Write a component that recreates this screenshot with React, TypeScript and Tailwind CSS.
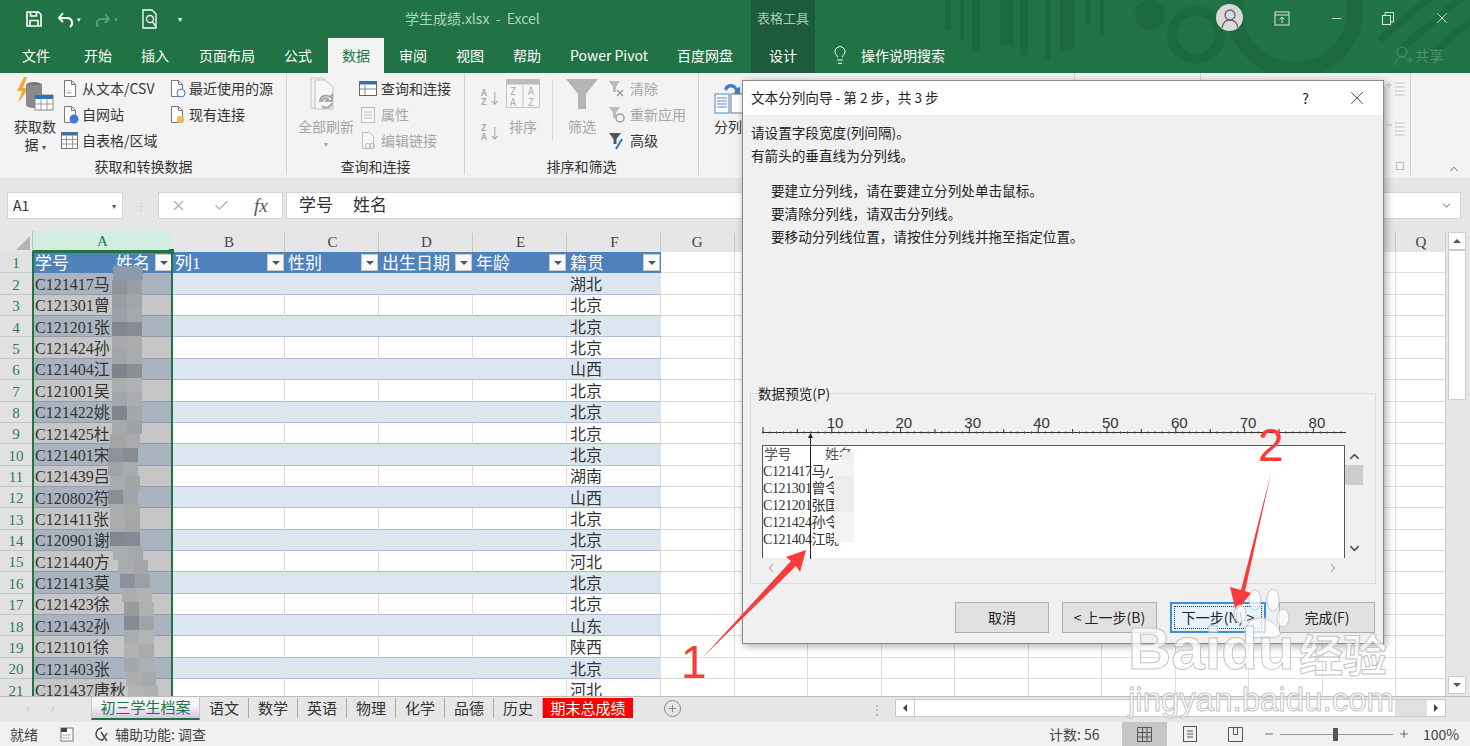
import type { ReactNode } from "react";
import { ChevronDown, ChevronUp, ChevronLeft, ChevronRight, Lightbulb, X, Check, Minus, Plus } from "lucide-react";

const ui = "font-['Noto_Sans_CJK_SC','Noto_Sans',sans-serif]";

const tabs = [
  { label: "文件", cls: "ml-[10px] w-[52px]" },
  { label: "开始", cls: "w-[72px]" },
  { label: "插入", cls: "w-[42px]" },
  { label: "页面布局", cls: "w-[102px]" },
  { label: "公式", cls: "w-[40px]" },
  { label: "数据", cls: "ml-[10px] w-[56px] bg-[#f3f3f3] text-[#217346]" },
  { label: "审阅", cls: "w-[58px]" },
  { label: "视图", cls: "w-[56px]" },
  { label: "帮助", cls: "w-[58px]" },
  { label: "Power Pivot", cls: "w-[106px]" },
  { label: "百度网盘", cls: "w-[86px]" },
  { label: "设计", cls: "ml-[3px] w-[64px] bg-[#1d5c3a]" },
];

const places = ["湖北", "北京", "北京", "北京", "山西", "北京", "北京", "北京", "北京", "湖南", "山西", "北京", "北京", "河北", "北京", "北京", "山东", "陕西", "北京", "河北"];
const ids = ["C121417马", "C121301曾", "C121201张", "C121424孙", "C121404江", "C121001吴", "C121422姚", "C121425杜", "C121401宋", "C121439吕", "C120802符", "C121411张", "C120901谢", "C121440方", "C121413莫", "C121423徐", "C121432孙", "C121101徐", "C121403张", "C121437唐秋"];
const sheets = ["语文", "数学", "英语", "物理", "化学", "品德", "历史"];
const tableCols = [
  { l: "B", w: "w-[113px]", t: "列1" },
  { l: "C", w: "w-[94px]", t: "性别" },
  { l: "D", w: "w-[94px]", t: "出生日期" },
  { l: "E", w: "w-[94px]", t: "年龄" },
  { l: "F", w: "w-[94px]", t: "籍贯" },
];
const plainCols = ["G", "H", "I", "J", "K", "L", "M", "N", "O", "P"];

// mosaic over the names: y, x, colour left, colour right
const mosaic: [number, number, string, string][] = [
  [266, 113, "#8d9aad", "#8d9aad"], [280, 112, "#8f949b", "#9a9ea3"], [294, 112, "#9a9ea3", "#a3a6a9"],
  [308, 112, "#9aa0a8", "#a5a9ae"], [322, 112, "#83868f", "#878b93"], [336, 112, "#a6a8aa", "#aaacae"],
  [350, 112, "#a3a5a8", "#a9abad"], [364, 112, "#7f838c", "#8a8e95"], [378, 112, "#aaacae", "#b0b2b3"],
  [392, 112, "#a4a7aa", "#abaeb0"], [406, 112, "#82858d", "#a3a8ad"], [420, 112, "#a7a9ab", "#a0a2a5"],
  [434, 110, "#a3a5a7", "#a8aaab"], [448, 108, "#8e929a", "#878b93"], [462, 108, "#a1a4a7", "#a8abad"],
  [476, 110, "#a9abad", "#a2a4a7"], [490, 108, "#8a8e95", "#a0a4a9"], [504, 110, "#aaacae", "#a6a8aa"],
  [518, 110, "#aaacae", "#a4a6a8"], [532, 110, "#82868e", "#858991"], [546, 113, "#abadaf", "#a6a8aa"],
  [560, 118, "#a9abad", "#a4a6a8"], [574, 120, "#8b909a", "#9ba0a6"], [588, 122, "#aaacae", "#b0b2b3"],
  [602, 124, "#9b9b9b", "#aeb0b1"], [616, 124, "#868a91", "#a0a4a8"], [630, 124, "#aaacae", "#b2b3b4"],
  [644, 124, "#b0b1b2", "#a8aaac"], [658, 124, "#a5a8ab", "#adb0b2"], [672, 126, "#adaeaf", "#a8a9aa"],
  [686, 128, "#b4b4b4", "#b0b0b0"],
];

function FilterBtn() {
  return (
    <span className="ml-auto flex h-[17px] w-[17px] shrink-0 items-center justify-center border border-[#c8c8c8] bg-[#f8f8f8]">
      <span className="h-0 w-0 border-x-[4px] border-t-[4px] border-x-transparent border-t-[#555]" />
    </span>
  );
}

function Doc({ badge }: { badge?: ReactNode }) {
  return (
    <svg width="17" height="19" viewBox="0 0 17 19" className="shrink-0">
      <path d="M2.5 1.5h7l4 4v12h-11z" fill="#fff" stroke="#777" />
      <path d="M9.5 1.5v4h4" fill="none" stroke="#777" />
      {badge}
    </svg>
  );
}

function RibbonItem({ icon, text, gray }: { icon: ReactNode; text: string; gray?: boolean }) {
  return (
    <div className={`flex h-[26px] items-center gap-[3px] whitespace-nowrap text-[14px] ${gray ? "text-[#a6a6a6]" : "text-[#333]"}`}>
      {icon}
      <span>{text}</span>
    </div>
  );
}

function SortMark({ top, bottom }: { top: string; bottom: string }) {
  return (
    <span className="flex items-center">
      <span className="flex flex-col">
        <span>{top}</span>
        <span>{bottom}</span>
      </span>
      <span className="ml-[1px] text-[14px] font-normal">↓</span>
    </span>
  );
}

function Ribbon() {
  return (
    <div className="flex h-[105px] shrink-0 bg-[#f3f3f3] text-[#333]">
      {/* 获取和转换数据 */}
      <div className="flex h-[102px] w-[287px] flex-col border-r border-[#d2d2d2]">
        <div className="flex h-[88px] pt-[3px]">
          <div className="ml-[13px] flex w-[44px] flex-col items-center">
            <svg width="40" height="36" viewBox="0 0 40 36">
              <path d="M9 1 2 15h5L3 27l11-15H8l4-11z" fill="#f0a93a" />
              <ellipse cx="19" cy="9" rx="8" ry="3" fill="#777" />
              <path d="M11 9v20c0 4 16 4 16 0V9z" fill="#8a8a8a" />
              <rect x="20" y="19" width="18" height="15" fill="#fff" stroke="#888" />
              <rect x="20" y="19" width="18" height="4" fill="#2f75b5" />
              <path d="M26 23v11M32 23v11M20 28h18" stroke="#999" />
            </svg>
            <span className="mt-[5px] text-[14px] leading-[18px]">获取数</span>
            <span className="text-[14px] leading-[18px]">据 <span className="text-[8px] text-[#555]">▾</span></span>
          </div>
          <div className="ml-[5px] -mt-[1px] flex w-[107px] flex-col">
            <RibbonItem text="从文本/CSV" icon={<Doc badge={<text x="4" y="15" fontSize="6" fill="#777">≡</text>} />} />
            <RibbonItem text="自网站" icon={<Doc badge={<circle cx="12" cy="14" r="4.5" fill="#3d7cc9" />} />} />
            <RibbonItem
              text="自表格/区域"
              icon={
                <svg width="19" height="19" viewBox="0 0 19 19" className="-ml-[2px] shrink-0">
                  <rect x="1.5" y="1.5" width="16" height="16" fill="#fff" stroke="#777" />
                  <rect x="1.5" y="1.5" width="16" height="3" fill="#2f75b5" />
                  <path d="M6.5 4v13M12.5 4v13M2 8.5h15M2 13h15" stroke="#999" />
                </svg>
              }
            />
          </div>
          <div className="-mt-[1px] flex flex-col">
            <RibbonItem text="最近使用的源" icon={<Doc badge={<circle cx="12" cy="14" r="4" fill="#fff" stroke="#3d7cc9" />} />} />
            <RibbonItem text="现有连接" icon={<Doc badge={<rect x="8" y="11" width="7" height="7" rx="2" fill="#f0b860" />} />} />
          </div>
        </div>
        <div className="pl-[1px] text-center text-[14px] leading-[18px]">获取和转换数据</div>
      </div>
      {/* 查询和连接 */}
      <div className="flex h-[102px] w-[178px] flex-col border-r border-[#d2d2d2]">
        <div className="flex h-[88px] pt-[3px]">
          <div className="ml-[11px] flex w-[56px] flex-col items-center text-[#a6a6a6]">
            <svg width="46" height="36" viewBox="0 0 46 36">
              <path d="M8 2h12l6 6v24H8z" fill="#f4f4f4" stroke="#c4c4c4" />
              <path d="M12 4h10l8 7v22H12z" fill="#f7f7f7" stroke="#bdbdbd" />
              <path d="M17 25a6 6 0 0 1 10-4l2-2v6h-6l2-2a4 4 0 0 0-6 2zM29 27a6 6 0 0 1-10 3" fill="none" stroke="#a8a8a8" strokeWidth="2" />
            </svg>
            <span className="mt-[5px] text-[14px] leading-[18px]">全部刷新</span>
            <span className="text-[8px] leading-[18px]">▾</span>
          </div>
          <div className="ml-[4px] -mt-[1px] flex flex-col">
            <RibbonItem
              text="查询和连接"
              icon={
                <svg width="20" height="19" viewBox="0 0 20 19" className="shrink-0">
                  <rect x="1.5" y="2.5" width="17" height="14" fill="#fff" stroke="#666" />
                  <rect x="1.5" y="2.5" width="17" height="3" fill="#2f75b5" />
                  <path d="M7 6v10M2 10h16" stroke="#888" />
                </svg>
              }
            />
            <RibbonItem
              gray
              text="属性"
              icon={
                <svg width="20" height="19" viewBox="0 0 20 19" className="shrink-0">
                  <rect x="3.5" y="2.5" width="13" height="15" fill="#f7f7f7" stroke="#bbb" />
                  <path d="M6 7h8M6 10h8M6 13h8" stroke="#bbb" />
                </svg>
              }
            />
            <RibbonItem
              gray
              text="编辑链接"
              icon={
                <svg width="20" height="19" viewBox="0 0 20 19" className="shrink-0">
                  <path d="M4.5 1.5h7l4 4v12h-11z" fill="#f7f7f7" stroke="#bbb" />
                  <circle cx="10" cy="15" r="2.5" fill="none" stroke="#bbb" />
                  <circle cx="14" cy="15" r="2.5" fill="none" stroke="#bbb" />
                </svg>
              }
            />
          </div>
        </div>
        <div className="text-center text-[14px] leading-[18px]">查询和连接</div>
      </div>
      {/* 排序和筛选 */}
      <div className="flex h-[102px] w-[234px] flex-col border-r border-[#d2d2d2]">
        <div className="flex h-[88px] pt-[6px] text-[#a6a6a6]">
          <div className="ml-[16px] flex w-[22px] flex-col gap-[17px] pt-[9px] text-[9px] font-bold leading-[9px] text-[#aaa]">
            <SortMark top="A" bottom="Z" />
            <SortMark top="Z" bottom="A" />
          </div>
          <div className="ml-[2px] flex w-[36px] flex-col items-center border-r-0">
            <svg width="34" height="29" viewBox="0 0 34 29">
              <rect x="0.5" y="0.5" width="33" height="28" fill="#f6f6f6" stroke="#c4c4c4" />
              <rect x="0.5" y="0.5" width="33" height="5" fill="#bdbdbd" />
              <path d="M17 6v22" stroke="#c4c4c4" />
              <text x="4" y="16" fontSize="10" fill="#aaa">Z</text><text x="22" y="16" fontSize="10" fill="#aaa">A</text>
              <text x="4" y="27" fontSize="10" fill="#aaa">A</text><text x="22" y="27" fontSize="10" fill="#aaa">Z</text>
            </svg>
            <span className="mt-[9px] text-[14px] leading-[18px]">排序</span>
          </div>
          <div className="ml-[11px] h-[62px] w-[1px] bg-[#dcdcdc]" />
          <div className="ml-[12px] flex w-[34px] flex-col items-center">
            <svg width="32" height="31" viewBox="0 0 32 31">
              <path d="M0 0h32L20 15v15h-8V15z" fill="#b5b5b5" />
            </svg>
            <span className="mt-[7px] text-[14px] leading-[18px]">筛选</span>
          </div>
          <div className="ml-[8px] -mt-[4px] flex flex-col">
            <RibbonItem gray text="清除" icon={<svg width="20" height="19" viewBox="0 0 20 19" className="shrink-0"><path d="M2 2h11L9 8v5H6V8z" fill="#bbb" /><path d="M10 11l6 6M16 11l-6 6" stroke="#999" strokeWidth="1.4" /></svg>} />
            <RibbonItem gray text="重新应用" icon={<svg width="20" height="19" viewBox="0 0 20 19" className="shrink-0"><path d="M2 2h11L9 8v5H6V8z" fill="#bbb" /><circle cx="13" cy="13" r="4" fill="none" stroke="#999" strokeWidth="1.4" /></svg>} />
            <RibbonItem text="高级" icon={<svg width="20" height="19" viewBox="0 0 20 19" className="shrink-0"><path d="M2 2h12L9.5 8v5h-3V8z" fill="#555" /><path d="M15 8l-6 10" stroke="#2f75b5" strokeWidth="2" /></svg>} />
          </div>
        </div>
        <div className="text-center text-[14px] leading-[18px]">排序和筛选</div>
      </div>
      {/* 数据工具, mostly under the dialog */}
      <div className="flex h-[102px] w-[376px] flex-col border-r border-[#d2d2d2]">
        <div className="ml-[15px] flex h-[83px] w-[40px] flex-col pt-[10px]">
          <svg width="30" height="32" viewBox="0 0 30 32">
            <path d="M10 6a7 7 0 0 1 13-1l3-1v7h-7l2-2a4 4 0 0 0-8-1z" fill="#3d7cc9" />
            <rect x="1" y="11" width="14" height="19" fill="#fff" stroke="#4a86c8" />
            <path d="M3 15h10M3 18h10M3 21h10M3 24h10" stroke="#4a86c8" />
            <rect x="17" y="11" width="12" height="19" fill="#fff" stroke="#777" />
          </svg>
          <span className="mt-[2px] whitespace-nowrap text-[14px] leading-[18px]">分列</span>
        </div>
      </div>
      <div className="h-[102px] w-[126px] border-r border-[#d2d2d2]" />
      {/* 分级显示, only its right edge shows past the dialog */}
      <div className="flex h-[102px] w-[210px] flex-col items-end gap-[24px] border-r border-[#d2d2d2] pr-[3px] pt-[8px]">
        <svg width="24" height="16" viewBox="0 0 24 16" stroke="#c4c4c4" fill="none">
          <path d="M3 4h6M6 1v6" />
          <path d="M12 2h10M12 6h10M12 10h10M12 14h10" />
        </svg>
        <svg width="24" height="16" viewBox="0 0 24 16" stroke="#c4c4c4" fill="none">
          <path d="M3 4h6" />
          <path d="M12 2h10M12 6h10M12 10h10M12 14h10" />
        </svg>
      </div>
      <div className="relative flex-1">
        <span className="absolute left-[-15px] bottom-[8px] h-[8px] w-[8px] border border-[#bbb]" />
        <ChevronUp className="absolute bottom-[2px] right-[9px] h-[14px] w-[14px] text-[#555]" strokeWidth={1.5} />
      </div>
    </div>
  );
}

function Sheet() {
  return (
    <div className="relative flex h-[465px] shrink-0 overflow-hidden bg-white font-['Liberation_Serif','Noto_Sans_CJK_SC',serif] text-[16px]">
      <div className="w-[1445px] shrink-0">
        {/* column letters */}
        <div className="flex h-[21px] bg-[#e6e6e6] pt-[2px] text-[15px] text-[#444]">
          <div className="relative -mt-[2px] w-[33px] shrink-0 border-r border-[#bbb]">
            <span className="absolute bottom-[2px] right-[2px] h-0 w-0 border-b-[14px] border-l-[14px] border-b-[#b4b4b4] border-l-transparent" />
          </div>
          <div className="-mt-[2px] flex w-[139px] shrink-0 items-center justify-center border-b-2 border-[#217346] bg-[#d2eee0] pt-[2px] text-[#217346]">A</div>
          {tableCols.map((c) => (
            <div key={c.l} className={`${c.w} flex shrink-0 items-center justify-center border-r border-[#c6c6c6] pl-[2px]`}>{c.l}</div>
          ))}
          {plainCols.map((c) => (
            <div key={c} className="flex w-[73.5px] shrink-0 items-center justify-center border-r border-[#c6c6c6]">{c === "G" ? c : ""}</div>
          ))}
          <div className="flex w-[50px] shrink-0 items-center justify-center">Q</div>
        </div>
        {/* header row */}
        <div className="flex h-[21.37px] text-[17px]">
          <RowHead n={1} />
          <div className="flex w-[139px] shrink-0 items-center whitespace-nowrap bg-[#4f81bd] pl-[2px] text-white">
            <span className="pt-[2px]">学号</span>
            <span className="ml-[47px] pt-[2px]">姓名</span>
            <FilterBtn />
          </div>
          {tableCols.map((c) => (
            <div key={c.l} className={`${c.w} flex shrink-0 items-center whitespace-nowrap bg-[#4f81bd] pl-[3px] pr-[1px] text-white`}>
              <span className="pt-[2px]">{c.t}</span>
              <FilterBtn />
            </div>
          ))}
          <GridRest />
        </div>
        {places.map((p, i) => {
          const band = i % 2 === 0;
          return (
            <div key={i} className="flex h-[21.37px]">
              <RowHead n={i + 2} />
              <div className={`flex w-[139px] shrink-0 items-center overflow-hidden whitespace-nowrap border-b border-[#8f9cab] pl-[2px] pt-[3px] text-[#333] ${band ? "bg-[#aab4c0]" : "bg-[#c6c6c6]"}`}>{ids[i]}</div>
              {tableCols.map((c) => (
                <div key={c.l} className={`${c.w} flex shrink-0 items-center border-b border-[#a9c0dd] pl-[3px] pt-[3px] text-[#333] ${band ? "bg-[#dce6f1]" : "border-r border-r-[#dcdcdc] bg-white"}`}>
                  {c.l === "F" ? p : ""}
                </div>
              ))}
              <GridRest />
            </div>
          );
        })}
        {/* selection outline */}
        <div className="pointer-events-none absolute left-[32px] top-[20px] h-[450px] w-[141px] border-x-2 border-t-2 border-[#217346]" />
        <div className="pointer-events-none absolute left-[169px] top-[18px] h-[5px] w-[5px] bg-[#217346]" />
        <svg className="pointer-events-none absolute left-0 top-0" width="180" height="465" viewBox="0 231 180 465">
          {mosaic.map(([y, x, a, b]) => (
            <g key={y}>
              <rect x={x} y={y} width="15" height="14" fill={a} />
              <rect x={x + 15} y={y} width="15" height="14" fill={b} />
            </g>
          ))}
        </svg>
      </div>
      {/* vertical scrollbar */}
      <div className="flex w-[25px] flex-col items-center border-l border-[#d0d0d0] bg-[#e6e6e6] pr-[3px] pt-[1px]">
        <div className="flex h-[18px] w-[18px] items-center justify-center border border-[#ccc] bg-white">
          <span className="h-0 w-0 border-x-[4px] border-b-[4px] border-x-transparent border-b-[#555]" />
        </div>
        <div className="h-[150px] w-[18px] border border-[#ccc] bg-white" />
        <div className="mt-auto mb-[2px] flex h-[18px] w-[18px] items-center justify-center border border-[#ccc] bg-white">
          <span className="h-0 w-0 border-x-[4px] border-t-[4px] border-x-transparent border-t-[#555]" />
        </div>
      </div>
    </div>
  );
}

function RowHead({ n }: { n: number }) {
  return (
    <div className="flex w-[33px] shrink-0 items-center justify-center border-b border-r border-[#c6c6c6] bg-[#e1e1e1] pt-[3px] text-[15px] text-[#2f7d55]">
      {n}
    </div>
  );
}

function GridRest() {
  return (
    <>
      {plainCols.map((c) => (
        <div key={c} className="w-[73.5px] shrink-0 border-b border-r border-[#dcdcdc]" />
      ))}
      <div className="w-[50px] shrink-0 border-b border-[#dcdcdc]" />
    </>
  );
}

function Dialog() {
  const ruler = [10, 20, 30, 40, 50, 60, 70, 80];
  const preview = ["C121417马小", "C121301曾令", "C121201张国", "C121424孙令", "C121404江晓"];
  return (
    <div className="absolute left-[742px] top-[80px] flex h-[564px] w-[642px] flex-col border border-[#8a8a8a] bg-[#f0f0f0] text-[13.6px] text-[#222] shadow-[2px_2px_8px_rgba(0,0,0,0.35)]">
      <div className="flex h-[34px] shrink-0 items-center bg-white pl-[8px] pr-[15px]">
        <span className="pb-[2px]">文本分列向导 - 第 2 步，共 3 步</span>
        <span className="ml-auto text-[14px]">?</span>
        <X className="ml-[37px] h-[22px] w-[22px] text-[#444]" strokeWidth={1} />
      </div>
      <div className="flex flex-col px-[8px] pt-[6px] leading-[23px]">
        <p>请设置字段宽度(列间隔)。</p>
        <p>有箭头的垂直线为分列线。</p>
        <div className="mt-[12px] pl-[20px]">
          <p>要建立分列线，请在要建立分列处单击鼠标。</p>
          <p>要清除分列线，请双击分列线。</p>
          <p>要移动分列线位置，请按住分列线并拖至指定位置。</p>
        </div>
      </div>
      {/* 数据预览 */}
      <div className="relative mx-[7px] mt-[145px] h-[191px] w-[626px] border border-[#dcdcdc]">
        <span className="absolute -top-[9px] left-[7px] bg-[#f0f0f0] leading-[16px]">数据预览(P)</span>
        <div className="absolute left-[75px] top-[20px] flex w-[500px] justify-between font-['Liberation_Sans',sans-serif] text-[15px] leading-[18px] text-[#333]">
          {ruler.map((r) => (
            <span key={r} className="w-[18px] text-center">{r}</span>
          ))}
        </div>
        <svg className="absolute left-[11px] top-[32px]" width="584" height="10" viewBox="0 0 584 10">
          <path d="M0 6.5h584" stroke="#333" />
          {Array.from({ length: 17 }, (_, i) => (
            <path key={i} d={`M${1 + i * 34.4} ${i % 2 ? 3 : 1}V6`} stroke="#333" />
          ))}
          {Array.from({ length: 85 }, (_, i) => (
            <path key={i} d={`M${1 + i * 6.88} 5V8`} stroke="#555" strokeWidth="0.7" />
          ))}
        </svg>
        <div className="absolute left-[11px] top-[51px] h-[113px] w-[583px] overflow-hidden border-x border-t border-[#555] bg-white font-['Liberation_Serif','Noto_Sans_CJK_SC',serif] text-[14px] leading-[17px] tracking-[-0.4px] text-[#333]">
          <div className="flex"><span className="w-[62px] pl-[1px] text-[#555]">学号</span><span className="text-[#555]">姓名</span></div>
          {preview.map((p) => (
            <div key={p}>{p}</div>
          ))}
          <svg className="absolute left-[65px] top-[6px]" width="26" height="90" viewBox="0 0 26 90">
            <rect x="14" y="0" width="12" height="90" fill="#f0f0f0" />
            <rect x="2" y="12" width="24" height="12" fill="#f4f4f4" />
            <rect x="6" y="24" width="20" height="36" fill="#ededed" />
            <rect x="6" y="60" width="20" height="30" fill="#f3f3f3" />
          </svg>
        </div>
        <svg className="absolute left-[55px] top-[37px]" width="9" height="128" viewBox="0 0 9 128">
          <path d="M4.500 6v122" stroke="#222" />
          <path d="M4.500 2 7 7H2z" fill="#222" />
        </svg>
        <ChevronUp className="absolute left-[596px] top-[55px] h-[15px] w-[15px] text-[#555]" strokeWidth={2.5} />
        <div className="absolute left-[594px] top-[71px] h-[20px] w-[18px] bg-[#cdcdcd]" />
        <ChevronDown className="absolute left-[596px] top-[147px] h-[15px] w-[15px] text-[#555]" strokeWidth={2.5} />
        <ChevronLeft className="absolute left-[13px] top-[167px] h-[14px] w-[14px] text-[#b8b8b8]" strokeWidth={2} />
        <ChevronRight className="absolute left-[575px] top-[167px] h-[14px] w-[14px] text-[#b8b8b8]" strokeWidth={2} />
      </div>
      {/* buttons */}
      <div className="mr-[8px] mt-[18px] flex justify-end gap-[13px]">
        <DlgBtn text="取消" cls="w-[94px]" />
        <DlgBtn text="< 上一步(B)" cls="w-[95px]" />
        <div className="flex h-[31px] w-[96px] items-center justify-center border-2 border-[#3a8fdc] bg-[#e5f1fb] text-[14px]">
          <span className="flex h-[23px] w-[88px] items-center justify-center border border-dotted border-[#333]">下一步(N) &gt;</span>
        </div>
        <DlgBtn text="完成(F)" cls="w-[96px]" />
      </div>
    </div>
  );
}

function DlgBtn({ text, cls }: { text: string; cls: string }) {
  return (
    <div className={`${cls} flex h-[31px] items-center justify-center border border-[#adadad] bg-[#e1e1e1] text-[14px]`}>{text}</div>
  );
}

export default function App() {
  return (
    <div className={`${ui} relative flex h-[746px] w-[1470px] flex-col overflow-hidden bg-[#e6e6e6]`}>
      {/* title + tabs */}
      <div className="relative h-[73px] shrink-0 overflow-hidden bg-[#217346] text-white">
        <svg className="absolute left-0 top-0" width="1470" height="73" viewBox="0 0 1470 73">
          <path d="M945 0h6v30h-6zM960 0h4v40h-4zM972 0h8v50h-8zM1000 0h14v45h-14zM1020 0h8v55h-8zM1045 0h5v60h-5zM1060 0h14v50h-14zM1085 0h6v25h-6zM1100 0h4v35h-4z" fill="#1d6a40" />
          <circle cx="1196" cy="35" r="24" fill="none" stroke="#1d6a40" strokeWidth="10" />
          <circle cx="1150" cy="15" r="15" fill="#1d6a40" />
          <circle cx="1295" cy="10" r="60" fill="none" stroke="#1d6a40" strokeWidth="16" />
          <path d="M1380 40 1450 -20M1400 50 1470 -10M1425 60 1500 -5" stroke="#1d6a40" strokeWidth="7" />
        </svg>
        <div className="absolute left-[751px] top-0 h-[38px] w-[64px] bg-[#1d5c3a] text-center text-[13px] leading-[36px] text-[#a9cbb8]">表格工具</div>
        {/* quick access */}
        <div className="relative flex h-[38px] items-center">
          <svg width="16" height="16" viewBox="0 0 16 16" className="ml-[26px]" fill="none" stroke="#fff" strokeWidth="1.6">
            <path d="M1 1h11.500L15 3.500V15H1z" />
            <path d="M4.500 1v4h6V1M4 15V9.500h8V15" />
          </svg>
          <svg width="20" height="18" viewBox="0 0 20 18" className="ml-[14px]" fill="none" stroke="#fff" strokeWidth="2">
            <path d="M4 8h8a5 5 0 0 1 2 9" />
            <path d="M7 3 3 8l4 4" />
          </svg>
          <span className="ml-[1px] text-[7px]">▾</span>
          <svg width="18" height="16" viewBox="0 0 18 16" className="ml-[13px]" fill="none" stroke="#5d9c7a" strokeWidth="2">
            <path d="M14 8H6a5 5 0 0 0-2 8" />
            <path d="M11 3l4 5-4 4" />
          </svg>
          <span className="ml-[2px] text-[7px] text-[#5d9c7a]">▾</span>
          <svg width="18" height="20" viewBox="0 0 18 20" className="ml-[23px]" fill="none" stroke="#fff" strokeWidth="1.3">
            <path d="M2 1h9l4 4v14H2z" />
            <circle cx="9" cy="10" r="3.5" />
            <path d="M11.500 13l3 4" />
          </svg>
          <span className="ml-[19px] text-[8px]">▾</span>
          <span className="absolute left-[405px] top-0 whitespace-pre text-[14px] leading-[36px] text-[#b6d2c2]">学生成绩.xlsx  -  Excel</span>
          <div className="absolute left-[1216px] top-[4px] flex h-[27px] w-[27px] items-center justify-center overflow-hidden rounded-full bg-[#d9d9d9]">
            <svg width="20" height="22" viewBox="0 0 20 22" fill="none" stroke="#666" strokeWidth="1.3">
              <circle cx="10" cy="8" r="5" />
              <path d="M2 21c1-6 4-8 8-8s7 2 8 8" />
            </svg>
          </div>
          <svg className="absolute left-[1274px] top-[11px]" width="16" height="15" viewBox="0 0 16 15" fill="none" stroke="#d6e6dc">
            <rect x="1" y="1" width="14" height="13" />
            <path d="M1 4h14M8 12V6M5.500 8.500 8 6l2.500 2.500" />
          </svg>
          <Minus className="absolute left-[1329px] top-[11px] h-[15px] w-[15px] text-[#d6e6dc]" strokeWidth={1.3} />
          <svg className="absolute left-[1381px] top-[11px]" width="14" height="15" viewBox="0 0 14 15" fill="none" stroke="#d6e6dc">
            <rect x="1.500" y="4.500" width="8" height="9" />
            <path d="M4 4V1.500h8.500V11H10" />
          </svg>
          <X className="absolute left-[1433px] top-[9px] h-[18px] w-[18px] text-[#d6e6dc]" strokeWidth={1.2} />
        </div>
        {/* tabs */}
        <div className="relative flex h-[35px] items-stretch text-[14px]">
          {tabs.map((t) => (
            <div key={t.label} className={`${t.cls} flex shrink-0 items-center justify-center whitespace-nowrap pb-[1px]`}>{t.label}</div>
          ))}
          <Lightbulb className="ml-[15px] mt-[7px] h-[20px] w-[20px] text-white" strokeWidth={1.2} />
          <span className="ml-[11px] flex items-center whitespace-nowrap pb-[1px]">操作说明搜索</span>
          <span className="absolute left-[1392px] top-0 flex h-[35px] items-center gap-[1px] whitespace-nowrap text-[14px] text-[#4d9470]">
            <svg width="22" height="22" viewBox="0 0 22 22" fill="none" stroke="#4d9470">
              <circle cx="10" cy="7" r="5" />
              <path d="M3 20c1-5 3-8 7-8 2 0 3 .5 4 2M15 15h6M18 12v6" />
            </svg>
            共享
          </span>
        </div>
      </div>
      <Ribbon />
      {/* formula bar */}
      <div className="flex h-[53px] shrink-0 items-start bg-[#e6e6e6] pt-[14px]">
        <div className="ml-[7px] flex h-[27px] w-[116px] items-center border border-[#d4d4d4] bg-white pl-[5px] pr-[6px] text-[14px] text-[#333]">
          A1<span className="ml-auto text-[8px] text-[#555]">▾</span>
        </div>
        <div className="flex h-[27px] w-[35px] items-center justify-center text-[10px] leading-[6px] tracking-tighter text-[#aaa]">⋮</div>
        <div className="flex h-[27px] w-[125px] items-center border border-[#d4d4d4] bg-white text-[#aaa]">
          <X className="ml-[11px] h-[17px] w-[17px]" strokeWidth={1.6} />
          <Check className="ml-[26px] h-[17px] w-[17px]" strokeWidth={1.6} />
          <span className="ml-[24px] font-['Liberation_Serif',serif] text-[19px] italic leading-none text-[#555]">fx</span>
        </div>
        <div className="ml-[3px] flex h-[27px] w-[1175px] items-center border border-[#d4d4d4] bg-white pl-[12px] text-[17px] text-[#333]">
          <span className="pb-[3px]">学号</span>
          <span className="ml-[20px] pb-[3px]">姓名</span>
          <ChevronDown className="ml-auto mr-[7px] h-[13px] w-[13px] text-[#999]" strokeWidth={2} />
        </div>
      </div>
      <Sheet />
      {/* sheet tabs */}
      <div className="flex h-[26px] shrink-0 items-start border-t border-[#bcbcbc] bg-[#e6e6e6] text-[15px] text-[#333]">
        <div className="flex h-[23px] w-[91px] items-center gap-[17px] pl-[24px] text-[#c4c4c4]">
          <ChevronLeft className="h-[12px] w-[8px]" strokeWidth={3} />
          <ChevronRight className="h-[12px] w-[8px]" strokeWidth={3} />
        </div>
        <div className="flex h-[23px] w-[109px] items-center justify-center border-b-[2px] border-x border-[#217346] border-x-[#c8c8c8] bg-[linear-gradient(#f4f4f4_40%,#d9c5e6)] text-[#217346]">初三学生档案</div>
        {sheets.map((s) => (
          <div key={s} className="mt-[1px] flex h-[20px] w-[49px] items-center justify-center border-r border-[#aaa]">{s}</div>
        ))}
        <div className="mt-[1px] flex h-[20px] w-[90px] items-center justify-center bg-[#ff0000] text-white">期末总成绩</div>
        <div className="ml-[31px] mt-[3px] flex h-[17px] w-[17px] items-center justify-center rounded-full border border-[#888] text-[#666]">
          <Plus className="h-[11px] w-[11px]" strokeWidth={1.5} />
        </div>
        <span className="ml-[190px] mt-[6px] text-[12px] leading-none text-[#aaa]">⋮</span>
        <div className="ml-[12px] mt-[2px] flex h-[18px] w-[551px] border border-[#c8c8c8] bg-[#e0e0e0]">
          <div className="flex w-[19px] items-center justify-center border-r border-[#c8c8c8] bg-white">
            <span className="h-0 w-0 border-y-[4px] border-r-[4px] border-y-transparent border-r-[#444]" />
          </div>
          <div className="w-[480px] bg-white" />
          <div className="ml-auto flex w-[18px] items-center justify-center bg-white">
            <span className="h-0 w-0 border-y-[4px] border-l-[4px] border-y-transparent border-l-[#444]" />
          </div>
        </div>
      </div>
      {/* status bar */}
      <div className="flex h-[24px] shrink-0 items-center bg-[#f1f1f1] text-[14px] text-[#444]">
        <span className="ml-[10px] w-[28px] shrink-0 whitespace-nowrap">就绪</span>
        <svg width="14" height="15" viewBox="0 0 14 15" className="ml-[22px] shrink-0">
          <rect x="1" y="1" width="12" height="13" fill="#fff" stroke="#777" />
          <rect x="1" y="1" width="6" height="4" fill="#444" />
          <path d="M3 8h8M3 11h8" stroke="#777" strokeDasharray="1.500 1" />
        </svg>
        <svg width="18" height="17" viewBox="0 0 18 17" className="ml-[21px] shrink-0" fill="none" stroke="#444" strokeWidth="1.4">
          <path d="M7 2a6 6 0 0 0 0 12" />
          <path d="M6 6l6 9M12 7l-5 8" />
        </svg>
        <span className="ml-[2px] w-[90px] shrink-0 whitespace-nowrap">辅助功能: 调查</span>
        <span className="ml-[844px] w-[73px] shrink-0 whitespace-nowrap">计数: 56</span>
        <div className="flex h-[24px] w-[45px] shrink-0 items-center justify-center bg-[#c6c6c6]">
          <svg width="15" height="15" viewBox="0 0 15 15" fill="none" stroke="#555"><path d="M.5.500h14v14H.5zM5.500.500v14M10 .500v14M.5 5.500h14M.5 10h14" /></svg>
        </div>
        <svg width="14" height="16" viewBox="0 0 14 16" className="ml-[16px] shrink-0" fill="none" stroke="#555">
          <rect x=".5" y=".5" width="13" height="15" /><path d="M4 5h6M4 8h6M4 11h6" />
        </svg>
        <svg width="15" height="15" viewBox="0 0 15 15" className="ml-[31px] shrink-0" fill="none" stroke="#555">
          <path d="M.5.500h14v14H.5zM5.500.500v7h4v-7" />
        </svg>
        <Minus className="ml-[20px] h-[12px] w-[12px] shrink-0" strokeWidth={1.5} />
        <div className="relative ml-[5px] h-[1px] w-[113px] shrink-0 bg-[#999]">
          <span className="absolute -top-[6px] left-[53px] h-[13px] w-[5px] bg-[#555]" />
        </div>
        <Plus className="ml-[5px] h-[12px] w-[12px] shrink-0" strokeWidth={1.5} />
        <span className="ml-[13px] whitespace-nowrap text-[14px]">100%</span>
      </div>

      <Dialog />

      {/* hand-drawn red annotations */}
      <svg className="pointer-events-none absolute left-0 top-0" width="1470" height="746" viewBox="0 0 1470 746">
        <polygon points="703,657 791,561 786,557 806,550 800,572 796,566" fill="#fb3a3a" />
        <polygon points="1271,473 1241,590 1230,587 1236,612 1251,593 1245,591" fill="#fb3a3a" />
      </svg>
      <span className="absolute left-[681px] top-[637px] font-['Liberation_Sans',sans-serif] text-[46px] leading-[50px] text-[#fb3a3a]">1</span>
      <span className="absolute left-[1258px] top-[420px] font-['Liberation_Sans',sans-serif] text-[46px] leading-[50px] text-[#fb3a3a]">2</span>

      {/* baidu watermark */}
      <svg className="pointer-events-none absolute left-[1225px] top-[586px]" width="66" height="60" viewBox="0 0 66 60" fill="#ffffff" fillOpacity="0.75" stroke="#c8c8c8">
        <ellipse cx="15" cy="28" rx="6" ry="9" />
        <ellipse cx="30" cy="14" rx="6" ry="10" />
        <ellipse cx="48" cy="14" rx="6" ry="11" />
        <ellipse cx="58" cy="32" rx="6" ry="9" />
        <path d="M20 46c2-10 8-14 16-14s16 6 20 16c-6 6-12 2-18 3-6 1-14 2-18-5z" />
      </svg>
      <span className="pointer-events-none absolute left-[1128px] top-[614px] font-['Liberation_Sans',sans-serif] text-[60px] font-bold leading-[70px] text-white/70 [-webkit-text-stroke:1px_#c4c4c4]">Baidu</span>
      <span className="pointer-events-none absolute left-[1299px] top-[628px] text-[44px] font-bold leading-[50px] text-white/70 [-webkit-text-stroke:1px_#c4c4c4]">经验</span>
      <span className="pointer-events-none absolute left-[1128px] top-[680px] font-['Liberation_Sans',sans-serif] text-[33px] leading-[40px] text-white/70 [-webkit-text-stroke:1px_#c4c4c4]">jingyan.baidu.com</span>
    </div>
  );
}
